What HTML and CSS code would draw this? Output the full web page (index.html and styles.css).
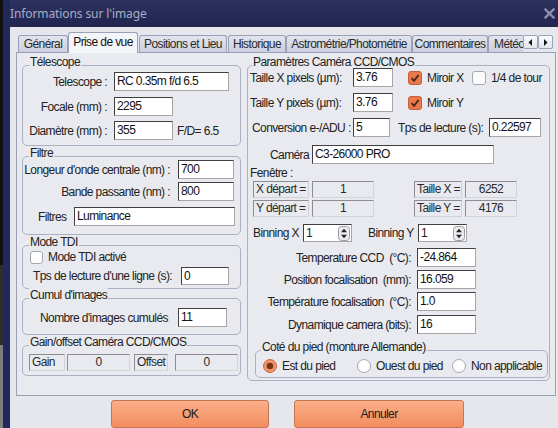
FILE: index.html
```html
<!DOCTYPE html>
<html lang="fr">
<head>
<meta charset="utf-8">
<title>Informations sur l'image</title>
<link rel="stylesheet" href="styles.css">
</head>
<body>
<div class="window">
  <div class="titlebar">
    <span class="title">Informations sur l'image</span>
    <svg class="close" width="11" height="11" viewBox="0 0 11 11"><path d="M1.5 1.5 L9.5 9.5 M9.5 1.5 L1.5 9.5" stroke="#8d92ab" stroke-width="2.3" stroke-linecap="square"/></svg>
  </div>
  <div class="dialog">
    <div class="tabs">
      <div class="tab t-gen">Général</div>
      <div class="tab active t-prise">Prise de vue</div>
      <div class="tab t-pos">Positions et Lieu</div>
      <div class="tab t-hist">Historique</div>
      <div class="tab t-astro">Astrométrie/Photométrie</div>
      <div class="tab t-com">Commentaires</div>
      <div class="tab t-meteo">Météo</div>
      <div class="scroll"><svg width="5" height="7" viewBox="0 0 5 7"><path d="M4 0 L4 7 L0.5 3.5Z" fill="#111"/></svg></div>
      <div class="scroll"><svg width="5" height="7" viewBox="0 0 5 7"><path d="M1 0 L1 7 L4.5 3.5Z" fill="#111"/></svg></div>
    </div>
    <div class="panel">
      <div class="col-left">
        <section class="group tel">
          <div class="legend">Télescope</div>
          <div class="row mt3"><span class="lbl">Telescope :</span><span class="field f-wide">RC 0.35m f/d 6.5</span></div>
          <div class="row mt6"><span class="lbl">Focale (mm) :</span><span class="field f-num">2295</span></div>
          <div class="row mt5"><span class="lbl">Diamètre (mm) :</span><span class="field f-num">355</span><span class="fd">F/D= 6.5</span></div>
        </section>
        <section class="group filtre">
          <div class="legend">Filtre</div>
          <div class="row mt0"><span class="lbl">Longeur d'onde centrale (nm) :</span><span class="field f-num">700</span></div>
          <div class="row mt3"><span class="lbl">Bande passante (nm) :</span><span class="field f-num">800</span></div>
          <div class="row mt6"><span class="lbl-short">Filtres</span><span class="field f-wide">Luminance</span></div>
        </section>
        <section class="group tdi">
          <div class="legend">Mode TDI</div>
          <div class="row mt1 check-row">
            <svg class="cb" width="13" height="13" viewBox="0 0 13 13"><rect x="0.5" y="0.5" width="12" height="12" rx="2.5" fill="#fdfdfe" stroke="#a4a7b4"/></svg>
            <span>Mode TDI activé</span>
          </div>
          <div class="row mt3"><span class="lbl">Tps de lecture d'une ligne (s):</span><span class="field f-num h18">0</span></div>
        </section>
        <section class="group cumul">
          <div class="legend">Cumul d'images</div>
          <div class="row mt6"><span class="lbl">Nombre d'images cumulés</span><span class="field f-num">11</span></div>
        </section>
        <section class="group gain">
          <div class="legend">Gain/offset Caméra CCD/CMOS</div>
          <div class="row mt5">
            <span class="ro ro-gain">Gain</span>
            <span class="ro ro-val c">0</span>
            <span class="ro ro-off">Offset</span>
            <span class="ro ro-val2 c">0</span>
          </div>
        </section>
      </div>

      <section class="group camera">
        <div class="legend">Paramètres Caméra CCD/CMOS</div>
        <div class="row mtm1">
          <span class="lbl-px">Taille X pixels (µm):</span><span class="field f-px">3.76</span>
          <span class="check c1">
            <svg width="14" height="14" viewBox="0 0 14 14"><rect x="0.5" y="0.5" width="13" height="13" rx="2.5" fill="#e7794a" stroke="#c4603a"/><path d="M3.6 7.2 L6 9.8 L10.6 4" fill="none" stroke="#4a2818" stroke-width="1.9"/></svg>
            <span>Miroir X</span>
          </span>
          <span class="check">
            <svg width="14" height="14" viewBox="0 0 14 14"><rect x="0.5" y="0.5" width="13" height="13" rx="2.5" fill="#fdfdfe" stroke="#a4a7b4"/></svg>
            <span>1/4 de tour</span>
          </span>
        </div>
        <div class="row mt6">
          <span class="lbl-px">Taille Y pixels (µm):</span><span class="field f-px">3.76</span>
          <span class="check c1">
            <svg width="14" height="14" viewBox="0 0 14 14"><rect x="0.5" y="0.5" width="13" height="13" rx="2.5" fill="#e7794a" stroke="#c4603a"/><path d="M3.6 7.2 L6 9.8 L10.6 4" fill="none" stroke="#4a2818" stroke-width="1.9"/></svg>
            <span>Miroir Y</span>
          </span>
        </div>
        <div class="row mt6">
          <span class="lbl-px lbl-conv">Conversion e-/ADU :</span><span class="field f-conv">5</span>
          <span class="lbl-tps">Tps de lecture (s):</span><span class="field f-tps">0.22597</span>
        </div>
        <div class="row mt8">
          <span class="lbl-cam">Caméra</span><span class="field f-cam">C3-26000 PRO</span>
        </div>
        <div class="row mt2 fen">Fenêtre :</div>
        <div class="row mt1">
          <span class="ro ro-lbl">X départ =</span><span class="ro ro-v1 c">1</span>
          <span class="ro ro-lbl2">Taille X =</span><span class="ro ro-v2 c">6252</span>
        </div>
        <div class="row mt2">
          <span class="ro ro-lbl">Y départ =</span><span class="ro ro-v1 c">1</span>
          <span class="ro ro-lbl2">Taille Y =</span><span class="ro ro-v2 c">4176</span>
        </div>
        <div class="row mt7">
          <span class="lbl-bin">Binning X</span>
          <span class="spin"><span>1</span><svg width="12" height="15" viewBox="0 0 12 15"><rect x="0.5" y="0.5" width="11" height="14" rx="3" fill="#ececf0" stroke="#9c9ca4"/><path d="M3 6.2 L6 2.8 L9 6.2Z M3 8.8 L6 12.2 L9 8.8Z" fill="#222"/></svg></span>
          <span class="lbl-bin lbl-biny">Binning Y</span>
          <span class="spin"><span>1</span><svg width="12" height="15" viewBox="0 0 12 15"><rect x="0.5" y="0.5" width="11" height="14" rx="3" fill="#ececf0" stroke="#9c9ca4"/><path d="M3 6.2 L6 2.8 L9 6.2Z M3 8.8 L6 12.2 L9 8.8Z" fill="#222"/></svg></span>
        </div>
        <div class="row mt6"><span class="lbl-r">Temperature CCD&nbsp; (°C):</span><span class="field f-r">-24.864</span></div>
        <div class="row mt3"><span class="lbl-r">Position focalisation&nbsp; (mm):</span><span class="field f-r">16.059</span></div>
        <div class="row mt3"><span class="lbl-r">Température focalisation&nbsp; (°C):</span><span class="field f-r">1.0</span></div>
        <div class="row mt4"><span class="lbl-r">Dynamique camera (bits):</span><span class="field f-r">16</span></div>

        <section class="group pied">
          <div class="legend">Coté du pied (monture Allemande)</div>
          <div class="row mt5 radios">
            <span class="radio r1">
              <svg width="14" height="14" viewBox="0 0 14 14"><circle cx="7" cy="7" r="6.5" fill="#f1946a" stroke="#c8683f"/><circle cx="7" cy="7" r="3.3" fill="#7a3418"/></svg>
              <span>Est du pied</span>
            </span>
            <span class="radio r2">
              <svg width="14" height="14" viewBox="0 0 14 14"><circle cx="7" cy="7" r="6.5" fill="#fdfdfe" stroke="#a4a7b4"/></svg>
              <span>Ouest du pied</span>
            </span>
            <span class="radio">
              <svg width="14" height="14" viewBox="0 0 14 14"><circle cx="7" cy="7" r="6.5" fill="#fdfdfe" stroke="#a4a7b4"/></svg>
              <span>Non applicable</span>
            </span>
          </div>
        </section>
      </section>
    </div>
    <div class="buttons">
      <div class="btn ok">OK</div>
      <div class="btn cancel">Annuler</div>
    </div>
  </div>
</div>
</body>
</html>
```

FILE: styles.css
```css
* { box-sizing: border-box; }
html, body { margin: 0; padding: 0; }
body {
  width: 558px;
  height: 428px;
  overflow: hidden;
  background: linear-gradient(to bottom, #101010 0, #101010 265px, #2e2e2e 265px, #2e2e2e 345px, #7d7d7d 345px);
  font-family: "Liberation Sans", Arial, sans-serif;
  font-size: 12px;
  letter-spacing: -0.6px;
  line-height: 14px;
  color: #222;
}

.window {
  margin-left: 3px;
  height: 428px;
  background: #23285a;
  padding-left: 7px;
  display: flex;
  flex-direction: column;
}

.titlebar {
  flex: none;
  height: 27px;
  display: flex;
  align-items: center;
  justify-content: space-between;
  padding-right: 3px;
  background: linear-gradient(#2d325f, #20244f);
}
.title {
  font-family: "Noto Sans", "Open Sans", sans-serif;
  font-size: 12px;
  letter-spacing: -0.1px;
  color: #a7adc6;
}
.close { display: block; }

.dialog {
  flex: 1;
  background: #e6e7ec;
  padding: 5px 0 0 6px;
}

/* tabs */
.tabs {
  display: flex;
  align-items: flex-end;
  height: 20px;
  padding-left: 2px;
}
.tab {
  flex: none;
  height: 17px;
  border: 1px solid #9ba0b6;
  border-bottom: none;
  border-radius: 3px 3px 0 0;
  background: linear-gradient(#e2e4ed, #cbd0e0);
  text-align: center;
  line-height: 16px;
  white-space: nowrap;
  overflow: hidden;
  color: #2a2a2a;
}
.tab.active {
  height: 21px;
  margin-bottom: -1px;
  margin-right: 1px;
  background: #f4f5f8;
  position: relative;
  z-index: 1;
  line-height: 19px;
  color: #111;
}
.t-gen { width: 50px; }
.t-prise { width: 70px; }
.t-pos { width: 88px; margin-right: 1px; }
.t-hist { width: 58px; }
.t-astro { width: 126px; }
.t-com { width: 76px; }
.t-meteo { width: 35px; text-align: left; padding-left: 5px; border-right: none; border-radius: 3px 0 0 0; }
.scroll {
  flex: none;
  align-self: flex-start;
  margin-top: 3px;
  width: 15px;
  height: 14px;
  border: 1px solid #9ca2b8;
  border-radius: 2px;
  background: linear-gradient(#fafbfd, #e2e5ee);
  display: flex;
  align-items: center;
  justify-content: center;
}

/* panel */
.panel {
  width: 540px;
  height: 344px;
  border: 1px solid #9a9fb4;
  background: #e9eaef;
  display: flex;
  align-items: flex-start;
  gap: 6px;
  padding: 12px 5px 0 5px;
}
.col-left {
  width: 219px;
  display: flex;
  flex-direction: column;
}
.group {
  border: 1px solid #acb0c2;
  border-radius: 5px;
}
.legend {
  width: max-content;
  margin: -11px 0 0 6px;
  padding: 0 1px;
  background: #e9eaef;
  height: 14px;
  line-height: 14px;
  white-space: nowrap;
}
.row {
  display: flex;
  align-items: center;
  white-space: nowrap;
}
.mtm1 { margin-top: -1px; }
.mt0 { margin-top: 0; }
.mt1 { margin-top: 1px; }
.mt2 { margin-top: 2px; }
.mt3 { margin-top: 3px; }
.mt4 { margin-top: 4px; }
.mt5 { margin-top: 5px; }
.mt6 { margin-top: 6px; }
.mt7 { margin-top: 7px; }
.mt8 { margin-top: 8px; }

.field {
  height: 19px;
  border: 1px solid;
  border-color: #3f3f3f #a6a6a6 #a6a6a6 #3f3f3f;
  background: #fff;
  padding-left: 2px;
  line-height: 17px;
  white-space: nowrap;
  overflow: hidden;
  color: #111;
}
.field.h18 { height: 18px; line-height: 16px; }
.ro {
  height: 17px;
  border: 1px solid;
  border-color: #8e8e92 #d2d3d8 #d2d3d8 #8e8e92;
  line-height: 15px;
  padding-left: 2px;
  color: #2a2a2a;
}
.ro.c { text-align: center; padding-left: 0; }

/* Télescope */
.tel { padding-bottom: 5px; }
.tel .lbl { width: 84px; text-align: right; margin-right: 7px; }
.tel .f-wide { width: 115px; }
.tel .f-num { width: 59px; }
.fd { margin-left: 4px; }

/* Filtre */
.filtre { margin-top: 10px; padding-bottom: 8px; }
.filtre .lbl { width: 147px; text-align: right; margin-right: 8px; }
.filtre .f-num { width: 56px; }
.lbl-short { width: 51px; padding-left: 15px; }
.filtre .f-wide { width: 161px; }

/* TDI */
.tdi { margin-top: 10px; padding-bottom: 3px; }
.check-row { padding-left: 7px; gap: 5px; height: 14px; }
.cb { display: block; }
.tdi .lbl { width: 158px; padding-left: 10px; }
.tdi .f-num { width: 48px; }

/* Cumul */
.cumul { margin-top: 9px; padding-bottom: 7px; }
.cumul .lbl { width: 155px; padding-left: 17px; }
.cumul .f-num { width: 49px; }

/* Gain */
.gain { margin-top: 10px; padding-bottom: 4px; }
.ro-gain { width: 36px; margin-left: 6px; }
.ro-val { width: 63px; margin-left: 2px; }
.ro-off { width: 34px; margin-left: 4px; }
.ro-val2 { width: 63px; margin-left: 7px; }

/* Camera */
.camera { width: 303px; height: 316px; }
.camera > .legend { margin-left: 4px; }
.lbl-px { width: 105px; padding-left: 2px; }
.lbl-conv { padding-left: 4px; }
.f-px { width: 40px; }
.check { display: flex; align-items: center; gap: 5px; }
.check svg { display: block; }
.check.c1 { width: 64px; margin-left: 15px; }
.f-conv { width: 37px; }
.lbl-tps { width: 91px; margin-left: 8px; }
.f-tps { width: 52px; }
.lbl-cam { width: 64px; padding-left: 22px; }
.f-cam { width: 182px; }
.fen { padding-left: 2px; height: 14px; }
.ro-lbl { width: 56px; margin-left: 5px; }
.ro-v1 { width: 62px; margin-left: 3px; }
.ro-lbl2 { width: 48px; margin-left: 40px; }
.ro-v2 { width: 52px; margin-left: 3px; }
.lbl-bin { width: 55px; padding-left: 5px; }
.lbl-biny { width: 50px; padding-left: 0; margin-left: 16px; }
.spin {
  width: 49px;
  height: 18px;
  border: 1px solid;
  border-color: #3f3f3f #a6a6a6 #a6a6a6 #3f3f3f;
  background: #fff;
  display: flex;
  align-items: center;
  justify-content: space-between;
  padding: 0 1px 0 2px;
}
.spin svg { display: block; }
.lbl-r { width: 163px; text-align: right; margin-right: 6px; }
.f-r { width: 59px; }

/* pied */
.pied { width: 293px; margin: 16px 0 0 7px; padding-bottom: 4px; }
.pied > .legend { margin-left: 5px; }
.radios { padding-left: 7px; }
.radio { display: flex; align-items: center; gap: 5px; }
.radio svg { display: block; }
.r1 { width: 94px; }
.r2 { width: 95px; }

/* buttons */
.buttons {
  display: flex;
  padding-left: 95px;
  margin-top: 4px;
}
.btn {
  height: 28px;
  border: 1px solid #c47552;
  border-radius: 3px;
  background: linear-gradient(#fbae89, #f28d5e);
  display: flex;
  align-items: center;
  justify-content: center;
  color: #1a1a1a;
}
.ok { width: 158px; }
.cancel { width: 170px; margin-left: 25px; }
```
